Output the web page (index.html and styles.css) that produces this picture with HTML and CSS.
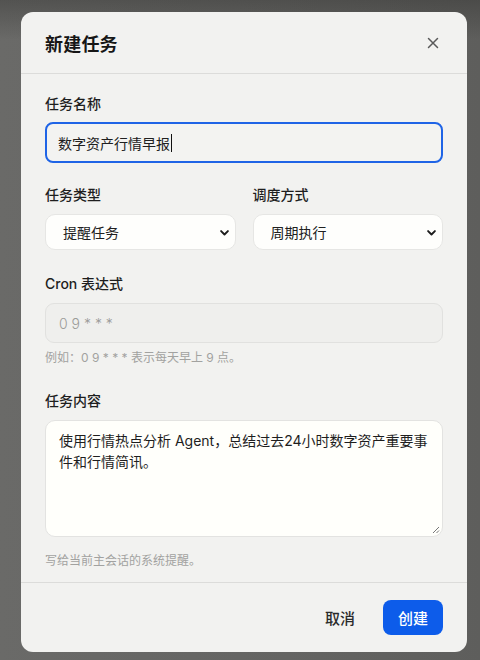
FILE: index.html
```html
<!DOCTYPE html>
<html lang="zh-CN">
<head>
<meta charset="utf-8">
<title>新建任务</title>
<link rel="stylesheet" href="styles.css">
</head>
<body>
<div class="backdrop">
  <div class="modal">
    <div class="modal-header">
      <h2 class="modal-title">新建任务</h2>
      <button class="close-btn" type="button" aria-label="关闭">
        <svg width="12" height="12" viewBox="0 0 12 12"><path d="M1.5 1.5 L10.5 10.5 M10.5 1.5 L1.5 10.5" stroke="#5a5a5a" stroke-width="1.5" stroke-linecap="round" fill="none"/></svg>
      </button>
    </div>
    <div class="modal-body">
      <div class="field">
        <label class="label">任务名称</label>
        <div class="input input-focus">数字资产行情早报<span class="caret"></span></div>
      </div>
      <div class="row">
        <div class="field">
          <label class="label">任务类型</label>
          <div class="select"><span>提醒任务</span>
            <svg class="chev" width="9" height="6" viewBox="0 0 9 6"><path d="M1.1 1.1 L4.5 4.5 L7.9 1.1" stroke="#1c1c1c" stroke-width="1.9" fill="none" stroke-linecap="round" stroke-linejoin="round"/></svg>
          </div>
        </div>
        <div class="field">
          <label class="label">调度方式</label>
          <div class="select"><span>周期执行</span>
            <svg class="chev" width="9" height="6" viewBox="0 0 9 6"><path d="M1.1 1.1 L4.5 4.5 L7.9 1.1" stroke="#1c1c1c" stroke-width="1.9" fill="none" stroke-linecap="round" stroke-linejoin="round"/></svg>
          </div>
        </div>
      </div>
      <div class="field field-gap">
        <label class="label">Cron 表达式</label>
        <div class="input input-disabled">0 9 * * *</div>
        <div class="hint hint-cron">例如：0 9 * * * 表示每天早上 9 点。</div>
      </div>
      <div class="field field-gap">
        <label class="label">任务内容</label>
        <div class="textarea">使用行情热点分析 Agent，总结过去24小时数字资产重要事件和行情简讯。
          <svg class="grip" width="9" height="9" viewBox="0 0 9 9"><path d="M8 2 L2 8 M8 5.5 L5.5 8" stroke="#777" stroke-width="1" fill="none"/></svg>
        </div>
        <div class="hint hint-text">写给当前主会话的系统提醒。</div>
      </div>
    </div>
    <div class="modal-footer">
      <button class="btn btn-ghost" type="button">取消</button>
      <button class="btn btn-primary" type="button">创建</button>
    </div>
  </div>
</div>
</body>
</html>
```
FILE: styles.css
```css
* { box-sizing: border-box; }
html, body { margin: 0; padding: 0; }
body {
  width: 480px;
  height: 660px;
  overflow: hidden;
  font-family: Inter, "Noto Sans CJK SC", sans-serif;
  color: #1d1d1d;
}
.backdrop {
  width: 480px;
  height: 660px;
  padding: 12px 13px 8px 21px;
  background:
    linear-gradient(180deg, rgba(40,40,38,0.35) 0px, rgba(40,40,38,0.0) 40px),
    linear-gradient(90deg, #6a6a68 0%, #646462 60%, #5e5e5c 100%);
}
.modal {
  width: 446px;
  height: 640px;
  background: #f2f2f0;
  border-radius: 12px;
  display: flex;
  flex-direction: column;
  overflow: hidden;
}
.modal-header {
  height: 62px;
  border-bottom: 1px solid #dcdcda;
  display: flex;
  align-items: center;
  justify-content: space-between;
  padding: 0 26px 0 24px;
}
.modal-title {
  margin: 0;
  font-size: 18px;
  font-weight: 700;
  color: #161616;
  letter-spacing: 0.2px;
}
.close-btn {
  border: 0;
  background: transparent;
  padding: 0;
  width: 16px;
  height: 16px;
  display: flex;
  align-items: center;
  justify-content: center;
}
.modal-body {
  flex: 1;
  padding: 20px 24px 0 24px;
}
.field { display: flex; flex-direction: column; }
.label {
  font-size: 14px;
  line-height: 20px;
  font-weight: 500;
  color: #1e1e1e;
  margin-bottom: 8px;
}
.input {
  height: 41px;
  border-radius: 8px;
  font-size: 14px;
  display: flex;
  align-items: center;
  padding: 0 12px;
}
.input-focus {
  border: 2px solid #1f64e6;
  background: #f3f3f1;
  color: #202020;
  padding-left: 11px;
}
.caret {
  display: inline-block;
  width: 1px;
  height: 18px;
  background: #111;
  margin-left: 1px;
}
.row {
  display: grid;
  grid-template-columns: 1fr 1fr;
  column-gap: 17px;
  margin-top: 22px;
}
.row .label { margin-bottom: 9px; }
.select {
  height: 36px;
  background: #fefefc;
  border: 1px solid #e6e6e4;
  border-radius: 10px;
  display: flex;
  align-items: center;
  justify-content: space-between;
  padding: 0 6px 0 17px;
  font-size: 14px;
  color: #202020;
}
.chev { margin-top: 1px; }
.field-gap { margin-top: 24px; }
.field-gap .label { margin-bottom: 9px; }
.input-disabled {
  height: 40px;
  background: #efefed;
  border: 1px solid #e1e1df;
  color: #9b9b99;
  padding-left: 13px;
  font-weight: 300;
  border-radius: 9px;
}
.hint {
  font-size: 12px;
  line-height: 18px;
  color: #a2a2a0;
}
.hint-cron { margin-top: 6px; }
.hint-text { margin-top: 15px; }
.textarea {
  position: relative;
  height: 117px;
  background: #fffffb;
  border: 1px solid #e3e3e1;
  border-radius: 10px;
  padding: 9px 13px;
  font-size: 14px;
  line-height: 21px;
  color: #1e1e1e;
}
.grip {
  position: absolute;
  right: 2px;
  bottom: 2px;
}
.modal-footer {
  height: 70px;
  border-top: 1px solid #dcdcda;
  display: flex;
  align-items: center;
  justify-content: flex-end;
  gap: 12px;
  padding: 0 24px 1px 24px;
}
.btn {
  font-family: Inter, "Noto Sans CJK SC", sans-serif;
  font-size: 15px;
  height: 35px;
  border-radius: 8px;
  border: 0;
  padding: 0 16px;
  display: flex;
  align-items: center;
  justify-content: center;
  white-space: nowrap;
}
.btn-ghost {
  background: transparent;
  color: #2a2a2a;
  font-weight: 500;
}
.btn-primary {
  width: 60px;
  padding: 0;
  background: #0d5cea;
  color: #fff;
  font-weight: 500;
}
```
